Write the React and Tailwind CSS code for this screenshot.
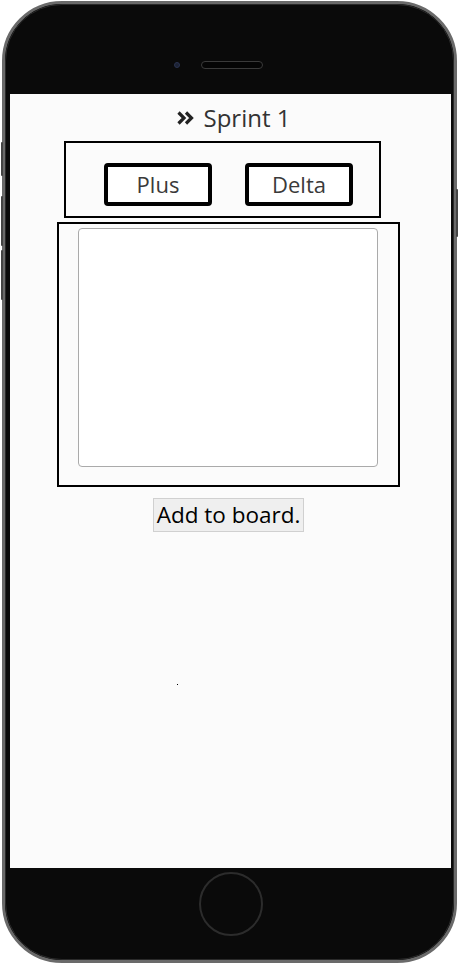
import React from 'react';

const font = { fontFamily: '"Open Sans", "Noto Sans", sans-serif' };

const DoubleChevron = () => (
  <svg width="19" height="16" viewBox="0 0 19 16" className="text-[#222]">
    <path d="M2.5 2.5 L8 8 L2.5 13.5" fill="none" stroke="currentColor" strokeWidth="3.2" strokeLinejoin="miter" />
    <path d="M10 2.5 L15.5 8 L10 13.5" fill="none" stroke="currentColor" strokeWidth="3.2" strokeLinejoin="miter" />
  </svg>
);

const Phone = ({ children }) => (
  <div className="w-[459px] h-[965px] bg-white pt-[1px] pl-[2px]">
    <div className="relative w-[455px] h-[962px] rounded-[60px] border-[3px] border-[#6a6a6a] bg-[#0a0a0a] px-[5px] pt-[90px]">
      <div className="absolute inset-0 rounded-[57px] border border-[#2a2a2a]" />
      {/* camera + speaker */}
      <div className="absolute top-[58px] left-[169px] w-[6px] h-[6px] rounded-full bg-[#1c2233] border border-[#2a3350]" />
      <div className="absolute top-[57px] left-[196px] w-[62px] h-[8px] rounded-full bg-[#050505] border border-[#3a3a3a]" />
      {/* side buttons */}
      <div className="absolute -left-[4px] top-[138px] w-[2px] h-[34px] bg-[#444] rounded" />
      <div className="absolute -left-[4px] top-[192px] w-[2px] h-[50px] bg-[#444] rounded" />
      <div className="absolute -left-[4px] top-[246px] w-[2px] h-[50px] bg-[#444] rounded" />
      <div className="absolute -right-[4px] top-[185px] w-[2px] h-[48px] bg-[#444] rounded" />
      <div className="relative w-[441px] h-[774px] bg-[#fbfbfb] overflow-hidden">{children}</div>
      {/* home button */}
      <div className="absolute left-[194px] top-[868px] w-[64px] h-[64px] rounded-full border-2 border-[#2c2c2c]" />
    </div>
  </div>
);

export default function App() {
  return (
    <Phone>
      <div className="flex flex-col text-[#333]" style={font}>
        <div className="mt-[10px] h-[28px] flex items-center justify-center gap-[9px] pl-[5px]">
          <DoubleChevron />
          <span className="text-[24px] leading-[28px]">Sprint 1</span>
        </div>

        <div className="ml-[54px] mt-[9px] w-[317px] h-[77px] border-2 border-black flex items-start pl-[38px] pt-[20px] gap-[33px]">
          <div className="w-[108px] h-[43px] border-4 border-black rounded-[4px] flex items-center justify-center text-[22px] text-[#3a3a3a] bg-white">
            Plus
          </div>
          <div className="w-[108px] h-[43px] border-4 border-black rounded-[4px] flex items-center justify-center text-[22px] text-[#3a3a3a] bg-white">
            Delta
          </div>
        </div>

        <div className="ml-[47px] mt-[4px] w-[343px] h-[265px] border-2 border-black pl-[19px] pt-[4px]">
          <textarea className="block w-[300px] h-[239px] bg-white border border-[#aaa] rounded-[4px] resize-none outline-none" />
        </div>

        <button className="ml-[143px] mt-[11px] w-[151px] h-[34px] bg-[#efefef] border border-[#d0d0d0] text-[22.5px] leading-none text-black flex items-center justify-center">
          Add to board.
        </button>

        <div className="ml-[167px] mt-[152px] w-[1px] h-[1px] bg-black" />
      </div>
    </Phone>
  );
}
